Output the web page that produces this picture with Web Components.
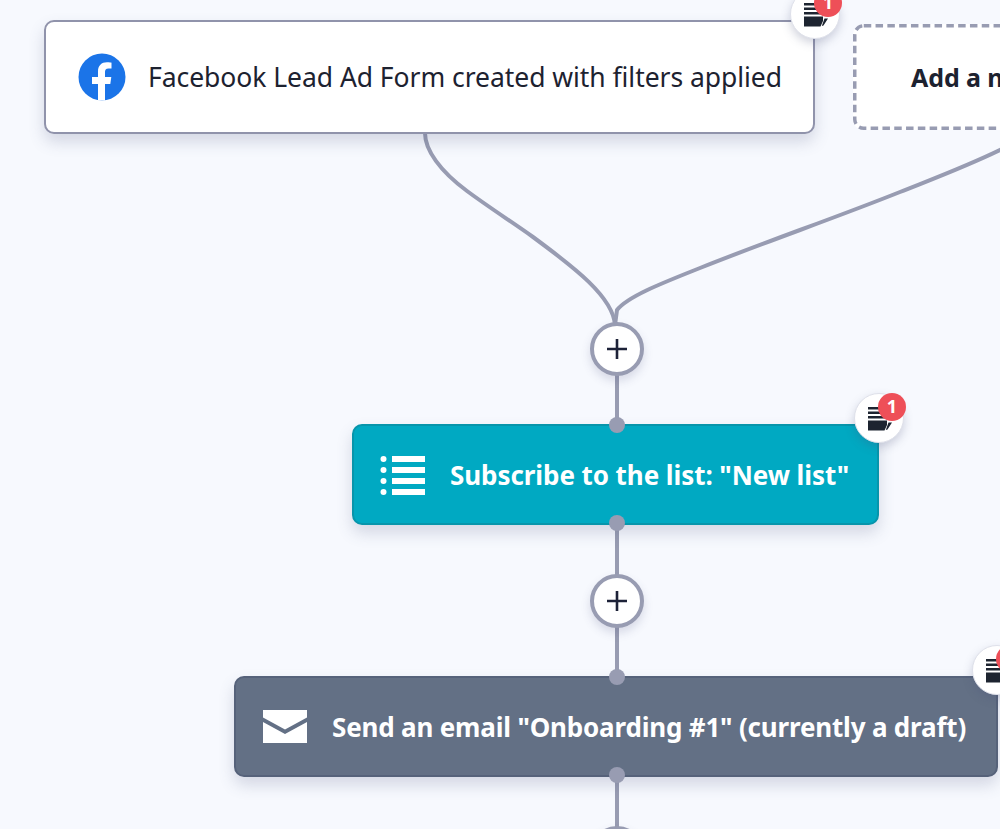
<!DOCTYPE html>
<html><head><meta charset="utf-8">
<style>
html,body{margin:0;height:100%;overflow:hidden;background:#f7f9fe;}
</style></head><body>
<template id="t-canvas"><style>
:host{display:block;position:relative;width:1000px;height:829px;overflow:hidden;background:#f7f9fe;font-family:"Noto Sans","Liberation Sans",sans-serif;}
svg.wires{position:absolute;left:0;top:0;}
</style>
<svg class="wires" width="1000" height="829" fill="none" stroke="#989cb2" stroke-width="4">
<path d="M425 133C425 150 440 171 467 191C490 208 512 222 533 237C575 268 613 297 615 325"/>
<path d="M1004 148C970 165 935 178 900 192C835 218 765 242 700 268C665 282 628 296 617 310L615 325"/>
<path d="M617 375V424M617 525V576M617 627V677M617 777V830"/>
</svg>
<slot></slot></template>

<template id="t-node"><style>
:host{position:absolute;box-sizing:border-box;display:flex;align-items:center;border-radius:10px;border:2px solid var(--bd);background:var(--bg);color:var(--fg);box-shadow:0 8px 16px rgba(70,80,120,.2);font-size:var(--fs,27px);font-weight:var(--fw,400);letter-spacing:var(--ls,0);white-space:nowrap;}
.ic{flex:none;display:flex;margin-left:var(--ml);margin-right:var(--mr);}
</style><span class="ic"><slot name="icon"></slot></span><span><slot></slot></span></template>

<template id="t-add"><style>
:host{position:absolute;box-sizing:border-box;display:flex;align-items:center;padding-left:58px;background:#fff;border-radius:10px;color:#1d2230;font-size:25px;font-weight:700;letter-spacing:-.1px;white-space:nowrap;}
svg{position:absolute;left:0;top:0;}
span{position:relative;}
</style><svg width="262" height="106" fill="none"><rect x="1.750" y="1.750" width="258" height="102.500" rx="9" stroke="#989cb2" stroke-width="3.500" stroke-dasharray="7.500 4.300"/></svg><span><slot></slot></span></template>

<template id="t-plus"><style>
:host{position:absolute;box-sizing:border-box;width:54px;height:54px;border-radius:50%;border:4px solid #989cb2;background:#fff;display:flex;align-items:center;justify-content:center;box-shadow:0 5px 10px rgba(70,80,120,.18);}
</style><svg width="22" height="22" viewBox="0 0 22 22"><path d="M1 11H21M11 1V21" stroke="#1d2238" stroke-width="2.600"/></svg></template>

<template id="t-dot"><style>
:host{position:absolute;width:16px;height:16px;border-radius:50%;background:#989cb2;}
</style></template>

<template id="t-badge"><style>
:host{position:absolute;box-sizing:border-box;width:50px;height:50px;border-radius:50%;background:#fff;border:1.500px solid #dfe1ea;box-shadow:0 4px 10px rgba(70,80,120,.25);}
svg{position:absolute;left:11.500px;top:11.500px;}
.n{position:absolute;left:23px;top:-1px;width:28px;height:28px;border-radius:50%;background:#ee4f58;color:#fff;font:700 18px/27px "Noto Sans","Liberation Sans",sans-serif;text-align:center;}
</style>
<svg width="26" height="26" viewBox="0 0 26 26"><path fill="#1d2430" d="M1 1H15V3.500H1ZM1 5.500H17V8H1ZM1 10H19V12.500H1ZM1 14.500H20V19L17.500 24.500H1ZM21.500 16.500H25L20.500 23.500L18.800 24Z"/></svg>
<span class="n">1</span></template>

<flow-canvas>
<flow-node style="left:44px;top:20px;width:771px;height:114px;--bd:#9093ab;--bg:#fff;--fg:#1d2230;--ml:32px;--mr:22px;--fs:26.500px;--ls:-.05px">
<svg slot="icon" width="48" height="48" viewBox="0 0 48 48"><circle cx="24" cy="24" r="23.500" fill="#1b74e8"/><path fill="#fff" d="M20 47.500V31H14V24H20V18.500C20 12.600 23.500 9.300 28.900 9.300C31.400 9.300 33.500 9.700 33.500 9.700V15.600H30.600C27.700 15.600 27 17.300 27 19.100V24H33.300L32.300 31H27V47.500Z"/></svg>
Facebook Lead Ad Form created with filters applied</flow-node>

<flow-add style="left:853px;top:24px;width:262px;height:106px">Add a new trigger</flow-add>

<flow-node style="left:352px;top:424px;width:527px;height:101px;--bd:#0795ab;--bg:#00a9c2;--fg:#fff;--ml:26px;--mr:24px;--fs:26px;--fw:700;--ls:-.07px">
<svg slot="icon" width="46" height="40" viewBox="0 0 46 40"><g fill="#fff"><circle cx="3.500" cy="4" r="3"/><circle cx="3.500" cy="15" r="3"/><circle cx="3.500" cy="26" r="3"/><circle cx="3.500" cy="37" r="3"/><path d="M12 1H45V7H12ZM12 12H45V18H12ZM12 23H45V29H12ZM12 34H45V40H12Z"/></g></svg>
Subscribe to the list: "New list"</flow-node>

<flow-node style="left:234px;top:676px;width:764px;height:101px;--bd:#56627a;--bg:#637085;--fg:#fff;--ml:27px;--mr:24px;--fs:26px;--fw:700;--ls:-.18px">
<svg slot="icon" width="45" height="34" viewBox="0 0 45 34"><path fill="#fff" d="M0 0H44V7.500L22 19.500L0 7.500ZM0 12L22 24L44 12V33H0Z"/></svg>
Send an email "Onboarding #1" (currently a draft)</flow-node>

<flow-plus style="left:590px;top:322px"></flow-plus>
<flow-plus style="left:590px;top:574px"></flow-plus>
<flow-plus style="left:590px;top:826px"></flow-plus>
<flow-dot style="left:609px;top:417px"></flow-dot>
<flow-dot style="left:609px;top:515px"></flow-dot>
<flow-dot style="left:609px;top:669px"></flow-dot>
<flow-dot style="left:609px;top:767px"></flow-dot>
<flow-badge style="left:790px;top:-11px"></flow-badge>
<flow-badge style="left:854px;top:393px"></flow-badge>
<flow-badge style="left:972px;top:645px"></flow-badge>
</flow-canvas>
<script>
for (const [name,id] of [['flow-canvas','t-canvas'],['flow-node','t-node'],['flow-add','t-add'],['flow-plus','t-plus'],['flow-dot','t-dot'],['flow-badge','t-badge']]) {
  customElements.define(name, class extends HTMLElement {
    constructor(){super();this.attachShadow({mode:'open'}).appendChild(document.getElementById(id).content.cloneNode(true));}
  });
}
</script>
</body></html>
